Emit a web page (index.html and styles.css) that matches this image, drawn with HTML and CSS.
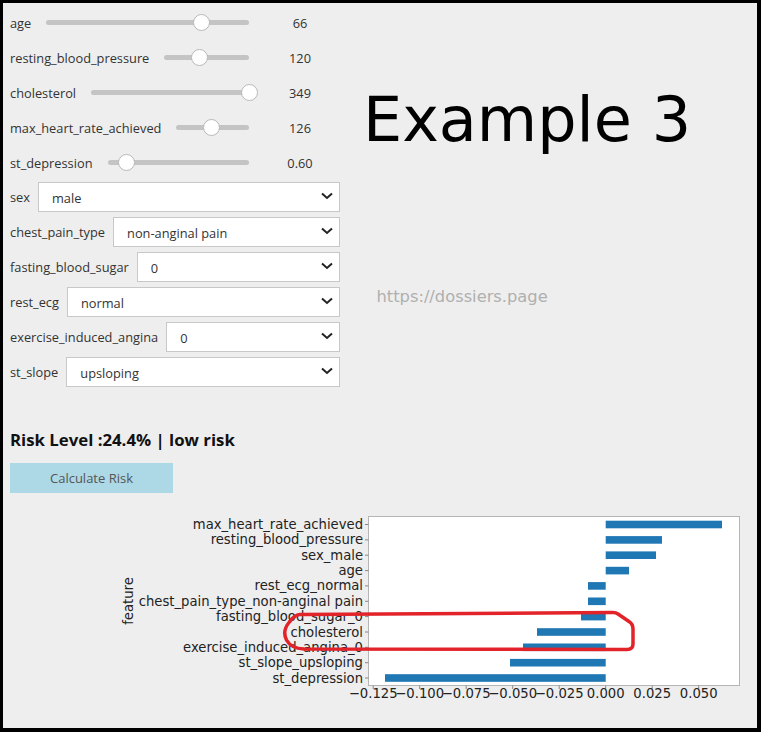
FILE: index.html
```html
<!DOCTYPE html>
<html>
<head>
<meta charset="utf-8">
<link rel="stylesheet" href="styles.css">
</head>
<body>
<div class="frame">
  <div class="top">
    <div class="controls">
      <div class="sliders">
        <div class="slider-row"><span class="lbl">age</span><div class="track"><span class="thumb" style="left:76.6%"></span></div><span class="val">66</span></div>
        <div class="slider-row"><span class="lbl">resting_blood_pressure</span><div class="track"><span class="thumb" style="left:41.7%"></span></div><span class="val">120</span></div>
        <div class="slider-row"><span class="lbl">cholesterol</span><div class="track"><span class="thumb" style="left:100%"></span></div><span class="val">349</span></div>
        <div class="slider-row"><span class="lbl">max_heart_rate_achieved</span><div class="track"><span class="thumb" style="left:48%"></span></div><span class="val">126</span></div>
        <div class="slider-row"><span class="lbl">st_depression</span><div class="track"><span class="thumb" style="left:13.5%"></span></div><span class="val">0.60</span></div>
      </div>
      <div class="dropdowns">
        <div class="dd-row"><span class="lbl">sex</span><div class="select"><span class="opt">male</span><svg class="chev" width="12" height="8" viewBox="0 0 12 8"><polyline points="1,1.5 6,6 11,1.5"/></svg></div></div>
        <div class="dd-row"><span class="lbl">chest_pain_type</span><div class="select"><span class="opt">non-anginal pain</span><svg class="chev" width="12" height="8" viewBox="0 0 12 8"><polyline points="1,1.5 6,6 11,1.5"/></svg></div></div>
        <div class="dd-row"><span class="lbl">fasting_blood_sugar</span><div class="select"><span class="opt">0</span><svg class="chev" width="12" height="8" viewBox="0 0 12 8"><polyline points="1,1.5 6,6 11,1.5"/></svg></div></div>
        <div class="dd-row"><span class="lbl">rest_ecg</span><div class="select"><span class="opt">normal</span><svg class="chev" width="12" height="8" viewBox="0 0 12 8"><polyline points="1,1.5 6,6 11,1.5"/></svg></div></div>
        <div class="dd-row"><span class="lbl">exercise_induced_angina</span><div class="select"><span class="opt">0</span><svg class="chev" width="12" height="8" viewBox="0 0 12 8"><polyline points="1,1.5 6,6 11,1.5"/></svg></div></div>
        <div class="dd-row"><span class="lbl">st_slope</span><div class="select"><span class="opt">upsloping</span><svg class="chev" width="12" height="8" viewBox="0 0 12 8"><polyline points="1,1.5 6,6 11,1.5"/></svg></div></div>
      </div>
      <div class="risk">Risk Level :24.4% | low risk</div>
      <button class="calc">Calculate Risk</button>
    </div>
    <div class="aside">
      <div class="title">Example 3</div>
      <div class="url">https://dossiers.page</div>
    </div>
  </div>
  <svg class="chart" width="754" height="235" viewBox="3 493 754 235">
    <rect class="axes" x="368.5" y="516.5" width="371" height="169"/>
    <g class="bars">
      <rect x="605.7" y="520.7" width="116.3" height="7.6"/>
      <rect x="605.7" y="536.1" width="56.3" height="7.6"/>
      <rect x="605.7" y="551.4" width="50.3" height="7.6"/>
      <rect x="605.7" y="566.8" width="23.3" height="7.6"/>
      <rect x="588" y="582.1" width="17.7" height="7.6"/>
      <rect x="588" y="597.5" width="17.7" height="7.6"/>
      <rect x="581" y="612.8" width="24.7" height="7.6"/>
      <rect x="537" y="628.2" width="68.7" height="7.6"/>
      <rect x="523" y="643.5" width="82.7" height="7.6"/>
      <rect x="510" y="658.9" width="95.7" height="7.6"/>
      <rect x="385" y="674.2" width="220.7" height="7.6"/>
    </g>
    <g class="ticks">
      <line x1="365" y1="524.5" x2="368.5" y2="524.5"/>
      <line x1="365" y1="539.9" x2="368.5" y2="539.9"/>
      <line x1="365" y1="555.2" x2="368.5" y2="555.2"/>
      <line x1="365" y1="570.6" x2="368.5" y2="570.6"/>
      <line x1="365" y1="585.9" x2="368.5" y2="585.9"/>
      <line x1="365" y1="601.3" x2="368.5" y2="601.3"/>
      <line x1="365" y1="616.6" x2="368.5" y2="616.6"/>
      <line x1="365" y1="632" x2="368.5" y2="632"/>
      <line x1="365" y1="647.3" x2="368.5" y2="647.3"/>
      <line x1="365" y1="662.7" x2="368.5" y2="662.7"/>
      <line x1="365" y1="678" x2="368.5" y2="678"/>
      <line x1="373.2" y1="685.5" x2="373.2" y2="689"/>
      <line x1="419.7" y1="685.5" x2="419.7" y2="689"/>
      <line x1="466.2" y1="685.5" x2="466.2" y2="689"/>
      <line x1="512.7" y1="685.5" x2="512.7" y2="689"/>
      <line x1="559.2" y1="685.5" x2="559.2" y2="689"/>
      <line x1="605.7" y1="685.5" x2="605.7" y2="689"/>
      <line x1="652.2" y1="685.5" x2="652.2" y2="689"/>
      <line x1="698.7" y1="685.5" x2="698.7" y2="689"/>
    </g>
    <g class="ylabels">
      <text x="363" y="524.5">max_heart_rate_achieved</text>
      <text x="363" y="539.9">resting_blood_pressure</text>
      <text x="363" y="555.2">sex_male</text>
      <text x="363" y="570.6">age</text>
      <text x="363" y="585.9">rest_ecg_normal</text>
      <text x="363" y="601.3">chest_pain_type_non-anginal pain</text>
      <text x="363" y="616.6">fasting_blood_sugar_0</text>
      <text x="363" y="632">cholesterol</text>
      <text x="363" y="647.3">exercise_induced_angina_0</text>
      <text x="363" y="662.7">st_slope_upsloping</text>
      <text x="363" y="678">st_depression</text>
    </g>
    <g class="xlabels">
      <text x="373.2" y="693">−0.125</text>
      <text x="419.7" y="693">−0.100</text>
      <text x="466.2" y="693">−0.075</text>
      <text x="512.7" y="693">−0.050</text>
      <text x="559.2" y="693">−0.025</text>
      <text x="605.7" y="693">0.000</text>
      <text x="652.2" y="693">0.025</text>
      <text x="698.7" y="693">0.050</text>
    </g>
    <text class="axlabel" transform="translate(128 601) rotate(-90)">feature</text>
    <path class="circle" d="M 300 614.5 L 613 612.5 Q 616 612.5 618 614 L 629 621.5 Q 633 624 633 629 L 633 644 Q 633 649.5 627 649.5 L 304 649 Q 291 648.5 286.5 640 Q 282 631 289 622.5 Q 294 615 300 614.5 Z"/>
  </svg>
</div>
</body>
</html>
```

FILE: styles.css
```css
html {
  background: #000;
}
body {
  margin: 0;
  background: #000;
}
.frame {
  margin: 3px 4px 0 3px;
  width: 754px;
  height: 725px;
  background: #eeeeee;
  overflow: hidden;
  font-family: "Open Sans", "Noto Sans", sans-serif;
  font-size: 12.8px;
  color: #333;
}
.top {
  display: flex;
  height: 490px;
}
.controls {
  width: 342px;
  flex: none;
  box-sizing: border-box;
  padding-left: 7px;
  padding-top: 2px;
  display: flex;
  flex-direction: column;
}
.sliders {
  display: flex;
  flex-direction: column;
}
.slider-row {
  height: 35px;
  display: flex;
  align-items: center;
}
.lbl {
  white-space: nowrap;
  flex: none;
}
.track {
  flex: 1;
  height: 5px;
  margin-left: 15px;
  margin-right: 6px;
  background: #c4c4c4;
  border-radius: 3px;
  position: relative;
}
.thumb {
  position: absolute;
  top: 50%;
  width: 15px;
  height: 15px;
  margin-left: -8.5px;
  margin-top: -8.5px;
  border: 1px solid #b8b8b8;
  border-radius: 50%;
  background: #fff;
}
.val {
  width: 90px;
  flex: none;
  text-align: center;
}
.dropdowns {
  margin-top: 2px;
  display: flex;
  flex-direction: column;
  gap: 5px;
  padding-right: 5px;
}
.dd-row {
  height: 30px;
  display: flex;
  align-items: center;
}
.dd-row .lbl {
  margin-right: 8px;
}
.select {
  flex: 1;
  height: 30px;
  box-sizing: border-box;
  border: 1px solid #c8c8c8;
  background: #fff;
  display: flex;
  align-items: center;
  padding-left: 13px;
  padding-right: 6px;
}
.opt {
  flex: 1;
  white-space: nowrap;
  padding-top: 1px;
}
.chev {
  display: block;
  margin-top: -3px;
}
.chev polyline {
  fill: none;
  stroke: #222;
  stroke-width: 2;
}
.risk {
  margin-top: 42px;
  height: 22px;
  line-height: 22px;
  font-size: 16.8px;
  font-weight: 700;
  color: #111;
  white-space: nowrap;
}
.calc {
  margin-top: 12px;
  width: 163px;
  height: 30px;
  border: none;
  background: #add8e6;
  font-family: "Open Sans", "Noto Sans", sans-serif;
  font-size: 13px;
  color: #555;
  padding: 0;
}
.aside {
  flex: 1;
  padding-top: 86px;
}
.title {
  margin-left: 18px;
  font-family: "DejaVu Sans", sans-serif;
  font-size: 62px;
  line-height: 62px;
  height: 62px;
  color: #000;
  white-space: nowrap;
}
.url {
  margin-top: 136px;
  margin-left: 31.5px;
  font-family: "DejaVu Sans", sans-serif;
  font-size: 16.3px;
  line-height: 19px;
  color: #b0b0b0;
}
.chart {
  display: block;
}
.axes {
  fill: #fff;
  stroke: #b5b5b5;
  stroke-width: 1;
}
.bars rect {
  fill: #1f77b4;
}
.ticks line {
  stroke: #888;
  stroke-width: 1;
}
.chart text {
  font-family: "DejaVu Sans", sans-serif;
  font-size: 13.2px;
  fill: #222;
}
.ylabels text {
  text-anchor: end;
  dominant-baseline: central;
}
.xlabels text {
  text-anchor: middle;
  dominant-baseline: central;
}
.axlabel {
  text-anchor: middle;
  dominant-baseline: central;
}
.circle {
  fill: none;
  stroke: #e3232a;
  stroke-width: 3.5;
  stroke-linejoin: round;
}
```
